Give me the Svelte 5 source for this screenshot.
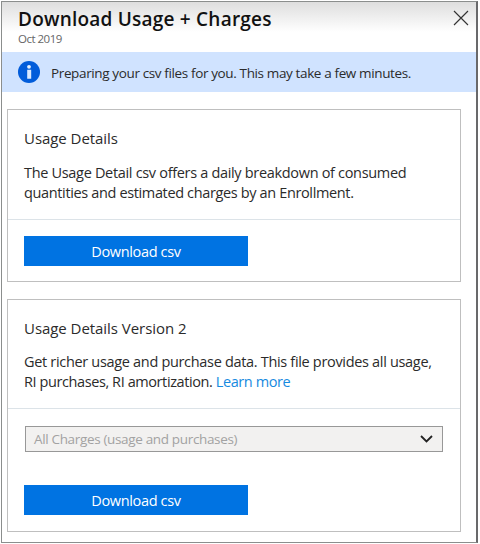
<script>
  const period = 'Oct 2019';
</script>

<main class="panel">
  <header>
    <div>
      <h1><span>Download Usage + Charges</span></h1>
      <p class="period"><span>{period}</span></p>
    </div>
    <svg class="close" width="16" height="16" viewBox="0 0 16 16" aria-label="Close">
      <path d="M1 1 15 15M15 1 1 15" fill="none" stroke="#333" stroke-width="1.15" />
    </svg>
  </header>

  <div class="banner">
    <svg width="22" height="22" viewBox="0 0 22 22">
      <circle cx="11" cy="11" r="11" fill="#015cda" />
      <circle cx="11" cy="5.8" r="1.9" fill="#e8f2ff" />
      <path d="M8.7 8.8h4.5v9H9.2V8.8z" fill="#d9e9ff" />
    </svg>
    <span class="notice">Preparing your csv files for you. This may take a few minutes.</span>
  </div>

  <section class="first">
    <div class="info">
      <h2><span class="h-a">Usage Details</span></h2>
      <p><span class="l1">The Usage Detail csv offers a daily breakdown of consumed</span><br /><span class="l2">quantities and estimated charges by an Enrollment.</span></p>
    </div>
    <div class="actions">
      <button><span>Download csv</span></button>
    </div>
  </section>

  <section class="second">
    <div class="info">
      <h2><span class="h-b">Usage Details Version 2</span></h2>
      <p><span class="l3">Get richer usage and purchase data. This file provides all usage,</span><br /><span class="l4">RI purchases, RI amortization. <a href="#more">Learn more</a></span></p>
    </div>
    <div class="actions">
      <div class="select">
        <span>All Charges (usage and purchases)</span>
        <svg width="13" height="8" viewBox="0 0 13 8">
          <path d="M1 1 6.5 6.5 12 1" fill="none" stroke="#222" stroke-width="1.8" />
        </svg>
      </div>
      <button><span>Download csv</span></button>
    </div>
  </section>
</main>

<style>
  :global(body) { background: #fff; }
  .panel {
    box-sizing: border-box;
    width: 477px;
    height: 542px;
    margin: 1px 0 0 1px;
    border: 1px solid #8b8e8d;
    border-right: 2px solid #69696b;
    background: #fff;
    color: #2b2b2b;
    font-family: "Open Sans", "Noto Sans", sans-serif;
    font-size: 14.5px;
    white-space: nowrap;
  }
  h1, h2, p { margin: 0; font-weight: 400; }
  header {
    box-sizing: border-box;
    height: 50px;
    padding: 4px 7px 0 16px;
    display: flex;
    justify-content: space-between;
    background: linear-gradient(#dedede, #fff 30px);
  }
  h1 {
    color: #111;
    font-size: 19px;
    font-weight: 600;
    line-height: 26px;
  }
  h1 span { letter-spacing: 0.22px; }
  .period {
    color: #666;
    font-size: 11.5px;
    line-height: 14px;
  }
  .period span { letter-spacing: -0.5px; }
  .close { margin-top: 4px; }
  .banner {
    height: 40px;
    padding-left: 16px;
    display: flex;
    align-items: center;
    gap: 11px;
    background: #d0e3ff;
  }
  .notice { padding-top: 1px; font-size: 13.5px; letter-spacing: -0.37px; }
  section {
    box-sizing: border-box;
    width: 454px;
    margin-left: 5px;
    border: 1px solid #bfbfbf;
  }
  .first { height: 173px; margin-top: 17px; }
  .second { height: 233px; margin-top: 17px; }
  .info {
    box-sizing: border-box;
    height: 110px;
    padding: 17px 0 0 16px;
    border-bottom: 1px solid #dce3e8;
  }
  .second .info { height: 109px; }
  h2 { font-size: 15px; line-height: 22px; }
  .info p { margin-top: 14px; line-height: 20px; }
  .second .info p { margin-top: 13px; }
  .info .h-a { letter-spacing: -0.05px; }
  .info .h-b { letter-spacing: -0.05px; }
  .l1 { letter-spacing: -0.32px; }
  .l2 { letter-spacing: -0.36px; }
  .l3 { letter-spacing: -0.32px; }
  .l4 { letter-spacing: -0.41px; }
  a { color: #168ae0; text-decoration: none; }
  .actions { padding: 16px 17px 0 16px; }
  button {
    display: block;
    width: 224px;
    height: 30px;
    padding: 0;
    border: 0;
    background: #0073e2;
    color: #fff;
    font: 14.5px "Open Sans", "Noto Sans", sans-serif;
    letter-spacing: -0.35px;
  }
  .select {
    box-sizing: border-box;
    height: 26px;
    margin: 1px 0 33px 1px;
    padding: 0 9px 0 8px;
    display: flex;
    align-items: center;
    justify-content: space-between;
    border: 1px solid #989898;
    background: #f2f1f0;
    color: #a2a2a2;
    font-size: 13.5px;
    letter-spacing: -0.34px;
  }
</style>
